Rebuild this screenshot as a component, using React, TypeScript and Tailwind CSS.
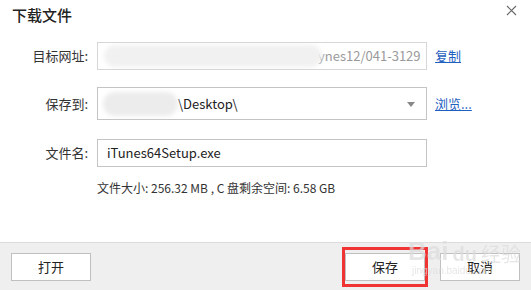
import React from "react";

const font = { fontFamily: '"Noto Sans CJK SC", "Noto Sans", sans-serif' };

export default function App() {
  return (
    <div className="relative w-[531px] h-[290px] bg-white flex flex-col overflow-hidden text-[#333]" style={font}>
      <div className="flex items-start justify-between pl-[12px] pr-[14px] pt-[3px] h-[42px]">
        <div className="text-[15px] font-medium text-[#222] leading-[22px] mt-[1px]">下载文件</div>
        <svg width="11" height="11" viewBox="0 0 11 11" className="mt-[2px]">
          <path d="M1 1L10 10M10 1L1 10" stroke="#666" strokeWidth="1.1" />
        </svg>
      </div>
      <div className="flex flex-col flex-1">
        <div className="flex items-center h-[28px]">
          <div className="w-[89px] text-right text-[13px] pr-[1px]">目标网址:</div>
          <div className="ml-[8px] w-[330px] h-[28px] border border-[#d6d6d6] flex items-center overflow-hidden">
            <div className="shrink-0 w-[218px] h-[22px] ml-[6px] rounded-full bg-[#f1f1f1] blur-[2px]" />
            <div className="shrink-0 whitespace-nowrap text-[13px] text-[#9a9a9a] -ml-[4px]">ynes12/041-3129</div>
          </div>
          <a className="ml-[8px] text-[13px] text-[#1f5fbf] underline">复制</a>
        </div>
        <div className="flex items-center h-[33px] mt-[17px]">
          <div className="w-[89px] text-right text-[13px] pr-[1px]">保存到:</div>
          <div className="ml-[8px] w-[330px] h-[33px] border border-[#c4c4c4] flex items-center relative">
            <div className="shrink-0 w-[75px] h-[24px] ml-[5px] rounded-full bg-[#ececec] blur-[2px]" />
            <div className="whitespace-nowrap text-[13px] text-[#222]">\Desktop\</div>
            <svg width="8" height="5" viewBox="0 0 8 5" className="absolute right-[11px] top-[14px]">
              <path d="M0 0H8L4 5Z" fill="#888" />
            </svg>
          </div>
          <a className="ml-[8px] text-[13px] text-[#1f5fbf] underline">浏览...</a>
        </div>
        <div className="flex items-center h-[28px] mt-[19px]">
          <div className="w-[89px] text-right text-[13px] pr-[1px]">文件名:</div>
          <div className="ml-[8px] w-[330px] h-[28px] border border-[#c4c4c4] flex items-center pl-[9px] text-[13px] text-[#222]">
            iTunes64Setup.exe
          </div>
        </div>
        <div className="ml-[97px] mt-[12px] text-[12px] text-[#333]">文件大小: 256.32 MB , C 盘剩余空间: 6.58 GB</div>
      </div>
      <div className="h-[48px] bg-[#efefef] border-t border-[#dcdcdc] flex items-center px-[11px] justify-between">
        <button className="w-[80px] h-[28px] border border-[#c0c0c0] bg-white text-[13px] text-[#222]">打开</button>
        <div className="flex items-center">
          <div className="border-[3px] border-[#f03434] mr-[12px] flex items-center h-[40px] w-[86px] justify-center">
            <button className="w-[80px] h-[28px] border border-[#c0c0c0] bg-white text-[13px] text-[#222]">保存</button>
          </div>
          <button className="w-[80px] h-[28px] border border-[#c0c0c0] bg-white text-[13px] text-[#222]">取消</button>
        </div>
      </div>
      <div className="absolute left-[408px] top-[238px] pointer-events-none text-[#dcdcdc] opacity-70 leading-none">
        <div className="flex items-end gap-[4px]">
          <span className="text-[26px] font-bold" style={{ fontFamily: '"Liberation Sans", sans-serif' }}>Bai</span>
          <span className="text-[20px] font-bold" style={{ fontFamily: '"Liberation Sans", sans-serif' }}>du</span>
          <span className="text-[20px]">经验</span>
        </div>
        <div className="text-[10px] ml-[4px] mt-[2px]" style={{ fontFamily: '"Liberation Sans", sans-serif' }}>jingyan.baidu.com</div>
      </div>
    </div>
  );
}
